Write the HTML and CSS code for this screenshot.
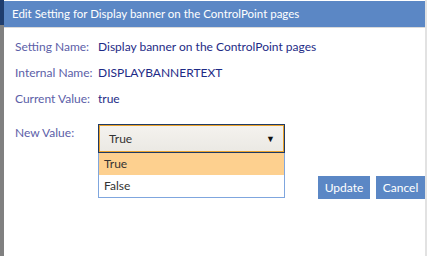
FILE: index.html
```html
<!DOCTYPE html>
<html lang="en">
<head>
    <meta charset="UTF-8">
    <title>Edit Setting</title>
    <link rel="stylesheet" href="styles.css">
</head>
<body>
    <div class="page">
        <div class="side-strip"><div class="side-top"></div></div>

        <div class="dialog">
            <div class="dialog-title">Edit Setting for Display banner on the ControlPoint pages</div>

            <div class="dialog-body">
                <div class="info-row">
                    <span class="info-label">Setting Name:</span>
                    <span class="info-value">Display banner on the ControlPoint pages</span>
                </div>
                <div class="info-row">
                    <span class="info-label">Internal Name:</span>
                    <span class="info-value">DISPLAYBANNERTEXT</span>
                </div>
                <div class="info-row">
                    <span class="info-label">Current Value:</span>
                    <span class="info-value">true</span>
                </div>

                <div class="edit-row">
                    <span class="info-label">New Value:</span>
                    <div class="select-wrap">
                        <div class="select-box">
                            <span>True</span>
                            <span class="select-arrow">&#9660;</span>
                        </div>
                        <ul class="select-list">
                            <li class="option selected">True</li>
                            <li class="option">False</li>
                        </ul>
                    </div>
                    <div class="actions">
                        <button class="btn btn-update">Update</button>
                        <button class="btn btn-cancel">Cancel</button>
                    </div>
                </div>
            </div>
        </div>

        <div class="edge"></div>
    </div>
</body>
</html>
```

FILE: styles.css
```css
/* Edit setting dialog */
body {
    margin: 0;
    font-family: Lato, "Open Sans", sans-serif;
    background: #fff;
}

.page {
    display: flex;
    height: 256px;
}

.side-strip {
    flex: none;
    width: 4px;
    background-color: #808080;
}

.side-top {
    height: 25px;
    background-color: #1f3d6e;
}

.dialog {
    flex: 1;
    min-width: 0;
    display: flex;
    flex-direction: column;
}

.edge {
    flex: none;
    width: 2px;
    background-color: #e2e2e2;
}

.dialog-title {
    margin-top: 1px;
    height: 26px;
    line-height: 26px;
    padding-left: 8px;
    background-color: #5b87c5;
    color: #fff;
    font-size: 11.5px;
    border-bottom: 1px solid #dadada;
}

.dialog-body {
    padding: 5px 0 0 11px;
    font-size: 12px;
}

.info-row {
    display: flex;
    height: 26px;
    align-items: center;
}

.info-label {
    flex: none;
    width: 83px;
    white-space: nowrap;
    color: #5c60a8;
}

.info-value {
    color: #1e2b86;
}

.edit-row {
    display: flex;
    align-items: flex-start;
    margin-top: 13px;
}

.edit-row .info-label {
    line-height: 18px;
}

.select-wrap {
    flex: none;
    width: 187px;
}

.select-box {
    display: flex;
    justify-content: space-between;
    align-items: center;
    height: 25px;
    padding: 0 8px 0 9px;
    border: 2px solid #eaa22c;
    outline: 1px solid #1e3a66;
    outline-offset: -1px;
    background: linear-gradient(#f4f2ee, #ebe9e4);
    color: #333;
}

.select-arrow {
    font-size: 9px;
    color: #111;
}

.select-list {
    list-style: none;
    margin: 0;
    padding: 0;
    border: 1px solid #7fa6de;
    border-top: none;
    background: #fff;
}

.option {
    height: 22px;
    line-height: 22px;
    padding-left: 5px;
    color: #333;
}

.option.selected {
    background-color: #fdd08f;
}

.actions {
    flex: none;
    display: flex;
    gap: 6px;
    margin-top: 52px;
    margin-left: 33px;
}

.btn {
    height: 23px;
    padding: 0;
    border: none;
    background-color: #5b87c5;
    color: #fff;
    font-family: inherit;
    font-size: 12px;
}

.btn-update {
    width: 52px;
}

.btn-cancel {
    width: 49px;
}
```
